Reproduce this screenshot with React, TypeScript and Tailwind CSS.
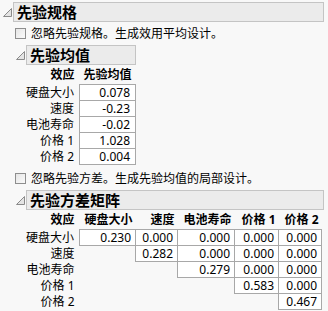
const font = "font-['Noto_Sans','Noto_Sans_CJK_SC',sans-serif]";

function Tri() {
  return (
    <svg width="9" height="9" viewBox="0 0 9 9" className="shrink-0">
      <polygon points="8.5,0.5 8.5,8.5 0.5,8.5" fill="#e4e4e4" stroke="#8a8a8a" strokeWidth="1" />
    </svg>
  );
}

function Bar({ title, className }: { title: string; className?: string }) {
  return (
    <div
      className={`h-[20px] border border-[#c4c4c4] bg-[#ebebeb] pl-[3px] flex items-center text-[15px] font-bold text-black leading-none ${className ?? ""}`}
    >
      {title}
    </div>
  );
}

function Check({ label }: { label: string }) {
  return (
    <div className="flex items-center h-[13px]">
      <div className="w-[11px] h-[11px] border border-[#8e8e8e] bg-gradient-to-br from-[#e6e6e6] to-[#fafafa]" />
      <span className="ml-[5px] text-[12px] leading-none text-black whitespace-nowrap">{label}</span>
    </div>
  );
}

// fixed-height cell content so collapsed borders give exact 16px rows
function Cell({ children, pr = "pr-[5px]" }: { children?: React.ReactNode; pr?: string }) {
  return <div className={`h-[15px] flex items-center justify-end whitespace-nowrap ${pr}`}>{children}</div>;
}

const effects = ["硬盘大小", "速度", "电池寿命", "价格 1", "价格 2"];
const means = ["0.078", "-0.23", "-0.02", "1.028", "0.004"];
const cov = [
  ["0.230", "0.000", "0.000", "0.000", "0.000"],
  ["", "0.282", "0.000", "0.000", "0.000"],
  ["", "", "0.279", "0.000", "0.000"],
  ["", "", "", "0.583", "0.000"],
  ["", "", "", "", "0.467"],
];
const widths = ["w-[56px]", "w-[42px]", "w-[57px]", "w-[44px]", "w-[43px]"];

export default function App() {
  return (
    <div className={`w-[328px] h-[311px] bg-[#f8f8f8] pt-[2px] overflow-hidden ${font}`}>
      <div className="flex items-center pl-[3px] pr-[4px]">
        <Tri />
        <Bar title="先验规格" className="ml-[1px] flex-1" />
      </div>
      <div className="pl-[15px] mt-[5px]">
        <Check label="忽略先验规格。生成效用平均设计。" />
      </div>

      <div className="flex items-center pl-[16px] mt-[5px]">
        <Tri />
        <Bar title="先验均值" className="ml-[1px] w-[110px]" />
      </div>
      <table className="ml-[26px] mt-[1px] border-collapse text-[12px] leading-none text-black">
        <thead>
          <tr>
            <th className="w-[53px] p-0 font-bold">
              <div className="h-[18px] flex items-center justify-end pr-[5px] whitespace-nowrap">效应</div>
            </th>
            <th className="w-[56px] p-0 font-bold">
              <div className="h-[18px] flex items-center justify-end pr-[4px] whitespace-nowrap">先验均值</div>
            </th>
          </tr>
        </thead>
        <tbody>
          {effects.map((e, i) => (
            <tr key={e}>
              <td className="p-0">
                <Cell>{e}</Cell>
              </td>
              <td className="p-0 border border-[#a8a8a8] bg-white">
                <Cell>{means[i]}</Cell>
              </td>
            </tr>
          ))}
        </tbody>
      </table>

      <div className="pl-[15px] mt-[7px]">
        <Check label="忽略先验方差。生成先验均值的局部设计。" />
      </div>

      <div className="flex items-center pl-[16px] pr-[4px] mt-[5px]">
        <Tri />
        <Bar title="先验方差矩阵" className="ml-[1px] flex-1" />
      </div>
      <table className="ml-[26px] mt-[1px] border-collapse text-[12px] leading-none text-black">
        <thead>
          <tr>
            <th className="w-[53px] p-0 font-bold">
              <div className="h-[18px] flex items-center justify-end pr-[5px] whitespace-nowrap">效应</div>
            </th>
            {effects.map((e, i) => (
              <th key={e} className={`${widths[i]} p-0 font-bold`}>
                <div className="h-[18px] flex items-center justify-end pr-[3px] whitespace-nowrap">{e}</div>
              </th>
            ))}
          </tr>
        </thead>
        <tbody>
          {effects.map((e, r) => (
            <tr key={e}>
              <td className="p-0">
                <Cell>{e}</Cell>
              </td>
              {cov[r].map((v, c) =>
                v ? (
                  <td key={c} className="p-0 border border-[#a8a8a8] bg-white">
                    <Cell pr="pr-[4px]">{v}</Cell>
                  </td>
                ) : (
                  <td key={c} className="p-0">
                    <Cell />
                  </td>
                )
              )}
            </tr>
          ))}
        </tbody>
      </table>
    </div>
  );
}
